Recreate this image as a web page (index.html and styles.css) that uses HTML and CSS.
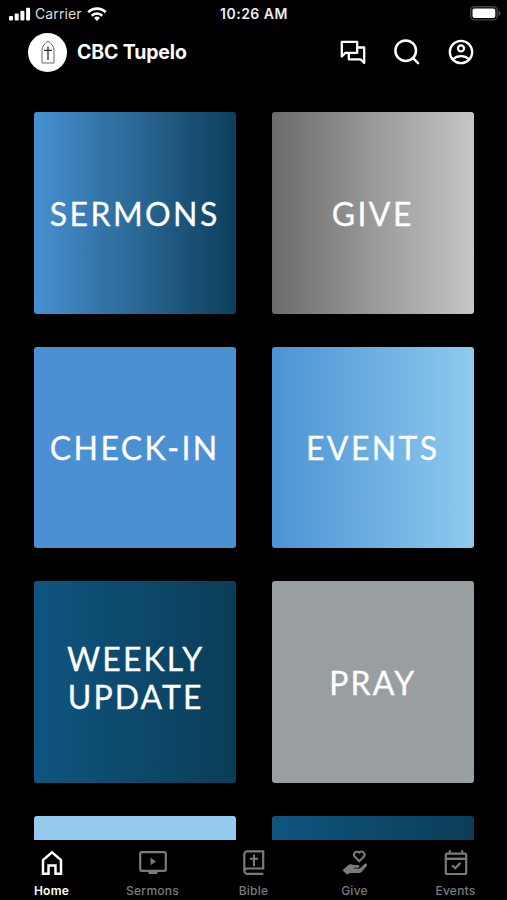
FILE: index.html
```html
<!DOCTYPE html>
<html lang="en">
<head>
  <meta charset="UTF-8">
  <title>CBC Tupelo</title>
  <meta name="viewport" content="width=device-width, initial-scale=1.0">
  <link rel="stylesheet" href="styles.css">
</head>
<body>
  <div class="app">
    <div class="status-bar">
      <div class="status-left">
        <svg class="signal" viewBox="0 0 22 14" fill="#fff">
          <rect x="0" y="9" width="4" height="4.5" rx="1"/>
          <rect x="5.7" y="6.5" width="4" height="7" rx="1"/>
          <rect x="11.4" y="3.7" width="4" height="9.8" rx="1"/>
          <rect x="17.1" y="0.7" width="4" height="12.8" rx="1"/>
        </svg>
        <span class="carrier">Carrier</span>
        <svg class="wifi" viewBox="0 0 20 14" fill="none" stroke="#fff" stroke-width="2.6">
          <path d="M1.3 5.2a12.4 12.4 0 0 1 17.4 0"/>
          <path d="M4.7 8.7a7.6 7.6 0 0 1 10.6 0"/>
          <path d="M10 14l-2.9-3a4.2 4.2 0 0 1 5.8 0z" fill="#fff" stroke="none"/>
        </svg>
      </div>
      <div class="time">10:26 AM</div>
      <div class="status-right">
        <svg class="battery" viewBox="0 0 31 15">
          <rect x="0.7" y="0.7" width="26.4" height="13.2" rx="3.6" fill="none" stroke="#444" stroke-width="1.4"/>
          <rect x="2.5" y="2.5" width="22.8" height="9.6" rx="2" fill="#fff"/>
          <path d="M28.5 5v4.8c1.2-.4 1.9-1.3 1.9-2.4s-.7-2-1.9-2.4z" fill="#555"/>
        </svg>
      </div>
    </div>

    <header class="header">
      <div class="logo">
        <svg viewBox="0 0 14 24" fill="none" stroke="#555" stroke-width="0.9">
          <path d="M1 23V10.5C1 6.5 4 3 7 1c3 2 6 5.5 6 9.5V23z"/>
          <path d="M7 6.5V20M3 10.3h8" stroke="#333" stroke-width="1.3"/>
        </svg>
      </div>
      <h1>CBC Tupelo</h1>
      <div class="actions">
        <svg viewBox="0 0 28 28" fill="none" stroke="#fff" stroke-width="2.3" stroke-linejoin="round">
          <path d="M2.8 18.5V3.8h15.4v11H6.5z"/>
          <path d="M18.2 9.5h7V25l-3.7-3.7H9.800v-6.5"/>
        </svg>
        <svg viewBox="0 0 28 28" fill="none" stroke="#fff" stroke-width="2.5" stroke-linecap="round">
          <circle cx="12.7" cy="12.7" r="10.3"/>
          <path d="M20.1 20.1l5 5"/>
        </svg>
        <svg viewBox="0 0 28 28" fill="none" stroke="#fff" stroke-width="2.3">
          <circle cx="14" cy="14" r="11.2"/>
          <circle cx="14" cy="10.4" r="3"/>
          <path d="M6 21.3c4.3-4.2 11.7-4.2 16 0"/>
        </svg>
      </div>
    </header>

    <main class="tiles">
      <a class="tile sermons">SERMONS</a>
      <a class="tile give">GIVE</a>
      <a class="tile check-in">CHECK-IN</a>
      <a class="tile events">EVENTS</a>
      <a class="tile weekly">WEEKLY<br>UPDATE</a>
      <a class="tile pray">PRAY</a>
      <a class="tile light"></a>
      <a class="tile dark"></a>
    </main>

    <nav class="tab-bar">
      <a class="tab active">
        <svg viewBox="0 0 30 30" fill="none" stroke="currentColor" stroke-width="2.5">
          <path d="M6 25.7V12L15 4.300 24 12v13.700h-5.500v-8.200h-7v8.200z"/>
        </svg>
        <span>Home</span>
      </a>
      <a class="tab">
        <svg viewBox="0 0 30 30" fill="none" stroke="currentColor" stroke-width="2.2">
          <rect x="2.2" y="4.2" width="25.6" height="18.6" rx="1.5"/>
          <path d="M10.5 24.5h9" stroke-width="3"/>
          <path d="M12.5 9.8v7.4l5.5-3.7z" fill="currentColor" stroke="none"/>
        </svg>
        <span>Sermons</span>
      </a>
      <a class="tab">
        <svg viewBox="0 0 30 30" fill="none" stroke="currentColor" stroke-width="2.2">
          <path d="M24.3 25.8h-16a3 3 0 0 1-3-3V6.3a3 3 0 0 1 3-3h15.900v17.200H8.300a3 3 0 0 0-3 2.500"/>
          <path d="M15 6.8v11.500M10.800 10.800h8.400" stroke-width="2"/>
        </svg>
        <span>Bible</span>
      </a>
      <a class="tab">
        <svg viewBox="0 0 30 30" fill="currentColor">
          <path d="M19.3 13.3l-4.400-4.500a3 3 0 0 1 4.400-4.200 3 3 0 0 1 4.400 4.200z" fill="none" stroke="currentColor" stroke-width="2"/>
          <path d="M2.500 22.300l5.300-4.800c2-1.600 3.700-1.600 6-.5h4.400c1.600.2 1.700 2.400.1 2.700h-4.200v.8h5.700l4.400-4.300c1.600-1.400 3.600-.1 2.700 1.600l-5.400 6.100c-.7.7-1.400 1-2.400 1h-9.300l-2.700 1.800z"/>
        </svg>
        <span>Give</span>
      </a>
      <a class="tab">
        <svg viewBox="0 0 30 30" fill="none" stroke="currentColor" stroke-width="2.2">
          <rect x="4.8" y="5.6" width="20.4" height="20.4" rx="1.5"/>
          <path d="M4.8 10.8h20.4" stroke-width="2.4"/>
          <path d="M8.8 2.3v4M21.2 2.3v4"/>
          <path d="M11.2 17.2l3 3 5.3-5.3"/>
        </svg>
        <span>Events</span>
      </a>
    </nav>
  </div>
</body>
</html>
```
FILE: styles.css
```css
* {
  box-sizing: border-box;
}

body {
  margin: 0;
  background: #000;
  color: #fff;
  font-family: Inter, "Liberation Sans", sans-serif;
}

.app {
  display: flex;
  flex-direction: column;
  height: 900px;
  overflow: hidden;
}

.status-bar {
  display: grid;
  grid-template-columns: 1fr auto 1fr;
  align-items: center;
  height: 27px;
  padding: 0 6px 0 9px;
  font-size: 14px;
}

.status-left {
  display: flex;
  align-items: center;
}

.signal {
  width: 22px;
  height: 14px;
  margin-right: 4px;
}

.carrier {
  color: #ddd;
  letter-spacing: 0.1px;
}

.wifi {
  width: 20px;
  height: 14px;
  margin-left: 5px;
}

.time {
  margin-right: 2px;
  font-weight: 600;
  letter-spacing: 0.5px;
  color: #eee;
}

.status-right {
  display: flex;
  justify-content: flex-end;
}

.battery {
  width: 31px;
  height: 15px;
}

.header {
  display: flex;
  align-items: center;
  height: 50px;
  padding: 0 32px 0 28px;
}

.logo {
  display: flex;
  align-items: center;
  justify-content: center;
  width: 39px;
  height: 39px;
  margin-right: 10px;
  border-radius: 50%;
  background: #fff;
}

.logo svg {
  width: 14px;
  height: 24px;
}

h1 {
  flex: 1;
  margin: 0;
  font-size: 19.5px;
  font-weight: 700;
  letter-spacing: -0.15px;
}

.actions {
  display: flex;
  gap: 26px;
}

.actions svg {
  width: 28px;
  height: 28px;
}

.tiles {
  flex: 1;
  min-height: 0;
  display: grid;
  grid-template-columns: 201.5px 201.5px;
  grid-auto-rows: 201.5px;
  gap: 33px 36.5px;
  padding: 35px 33px 0 34px;
  overflow: hidden;
}

.tile {
  display: flex;
  align-items: center;
  justify-content: center;
  padding-top: 2px;
  border-radius: 3px;
  font-family: Lato, sans-serif;
  font-size: 32px;
  line-height: 38px;
  letter-spacing: 2.4px;
  text-align: center;
  -webkit-text-stroke: 0.3px #fff;
}

.sermons {
  background: linear-gradient(to right, #4690d2, #28648f 55%, #0b3f5c);
}

.give {
  background: linear-gradient(to right, #6b6b6b, #c6c6c6);
}

.check-in {
  background: #4a90d2;
}

.events {
  background: linear-gradient(to right, #4a93d4, #8fcaef);
}

.weekly {
  padding: 0 0 8px 2px;
  letter-spacing: 2.1px;
  background: linear-gradient(to right, #0f5580, #0a3d57);
}

.pray {
  letter-spacing: 2.1px;
  background: #999ea1;
}

.light {
  background: #94caf0;
}

.dark {
  background: linear-gradient(to right, #0f5580, #0a3d57);
}

.tab-bar {
  display: flex;
  height: 60px;
  padding: 0 1px;
  background: #000;
}

.tab {
  flex: 1;
  display: flex;
  flex-direction: column;
  align-items: center;
  padding-top: 8px;
  color: #7b7b7b;
  font-size: 12px;
  font-weight: 500;
  line-height: 16px;
  letter-spacing: 0.25px;
}

.tab svg {
  width: 30px;
  height: 30px;
  margin-bottom: 5px;
}

.tab.active {
  color: #fff;
  font-weight: 600;
}
```
